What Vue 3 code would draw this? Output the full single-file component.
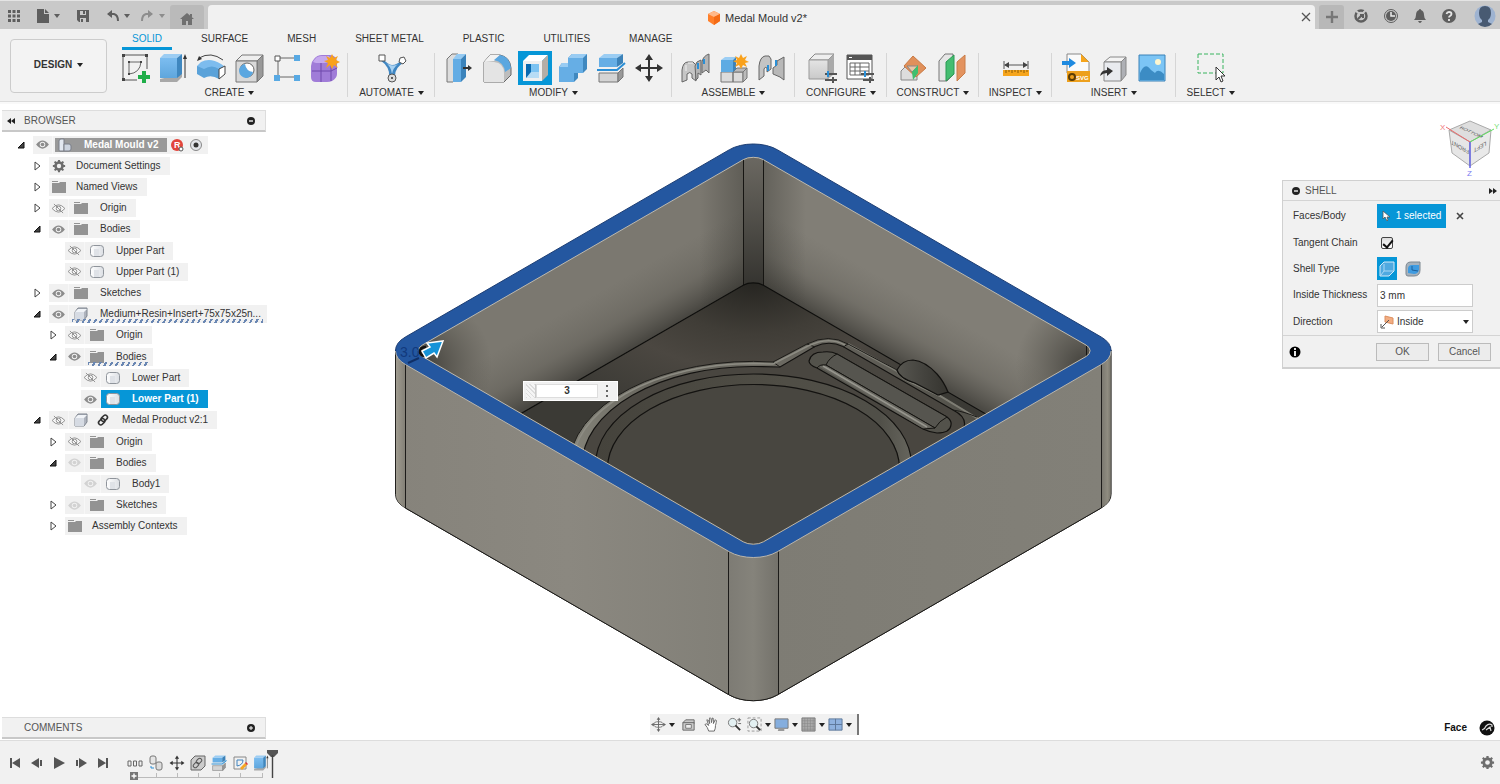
<script setup>
import { ref } from 'vue'

const tabs = ['SOLID', 'SURFACE', 'MESH', 'SHEET METAL', 'PLASTIC', 'UTILITIES', 'MANAGE']
const activeTab = ref('SOLID')

const groups = [
  { label: 'CREATE', icons: ['sketch', 'extrude', 'revolve', 'hole', 'pattern', 'form'] },
  { label: 'AUTOMATE', icons: ['automate'] },
  { label: 'MODIFY', icons: ['presspull', 'fillet', 'shell', 'combine', 'split', 'move'] },
  { label: 'ASSEMBLE', icons: ['joint', 'component', 'asbuilt'] },
  { label: 'CONFIGURE', icons: ['config', 'table'] },
  { label: 'CONSTRUCT', icons: ['plane', 'midplane'] },
  { label: 'INSPECT', icons: ['measure'] },
  { label: 'INSERT', icons: ['svgfile', 'derive', 'canvas'] },
  { label: 'SELECT', icons: ['select'] },
]

const rows = [
  { level: 0, open: true, eye: 'on', icon: 'assembly', name: 'Medal Mould v2', root: true },
  { level: 1, open: false, icon: 'gear', name: 'Document Settings' },
  { level: 1, open: false, icon: 'folder', name: 'Named Views' },
  { level: 1, open: false, eye: 'off', icon: 'folder', name: 'Origin' },
  { level: 1, open: true, eye: 'on', icon: 'folder', name: 'Bodies' },
  { level: 2, eye: 'off', icon: 'body', name: 'Upper Part' },
  { level: 2, eye: 'off', icon: 'body', name: 'Upper Part (1)' },
  { level: 1, open: false, eye: 'on', icon: 'folder', name: 'Sketches' },
  { level: 1, open: true, eye: 'on', icon: 'comp', name: 'Medium+Resin+Insert+75x75x25n...', hatch: true },
  { level: 2, open: false, eye: 'off', icon: 'folder', name: 'Origin' },
  { level: 2, open: true, eye: 'on', icon: 'folder', name: 'Bodies', hatch: true },
  { level: 3, eye: 'off', icon: 'body', name: 'Lower Part' },
  { level: 3, eye: 'on', icon: 'body', name: 'Lower Part (1)', selected: true },
  { level: 1, open: true, eye: 'off', icon: 'comp', link: true, name: 'Medal Product v2:1' },
  { level: 2, open: false, eye: 'off', icon: 'folder', name: 'Origin' },
  { level: 2, open: true, eye: 'pale', icon: 'folder', name: 'Bodies' },
  { level: 3, eye: 'pale', icon: 'body', name: 'Body1' },
  { level: 2, open: false, eye: 'pale', icon: 'folder', name: 'Sketches' },
  { level: 2, open: false, icon: 'folder', name: 'Assembly Contexts' },
]

const navTools = [
  { id: 'orbit', caret: true },
  { id: 'lookat' },
  { id: 'pan' },
  { id: 'zoom' },
  { id: 'fit', caret: true },
  { id: 'display', caret: true },
  { id: 'grid', caret: true },
  { id: 'views', caret: true },
]

const playback = ['first', 'prev', 'play', 'next', 'last']
const features = ['dots', 'copy', 'move', 'rigid', 'split', 'sketchedit', 'extrude']

const tangent = ref(true)
const thickness = ref('3 mm')
const distance = ref('3')
const direction = ref('Inside')
</script>

<template>
  <div class="app">
    <svg class="sprite" aria-hidden="true">
      <defs>
        <linearGradient id="gBlue" x1="0" y1="0" x2="0" y2="1"><stop offset="0" stop-color="#7cbdf0" /><stop offset="1" stop-color="#5ea6dd" /></linearGradient>
        <linearGradient id="gGrey" x1="0" y1="0" x2="0" y2="1"><stop offset="0" stop-color="#e4e4e4" /><stop offset="1" stop-color="#c9c9c9" /></linearGradient>
        <linearGradient id="gBody" x1="0" y1="0" x2="1" y2="0"><stop offset="0" stop-color="#fff" /><stop offset="1" stop-color="#dcdfe4" /></linearGradient>
      </defs>

      <symbol id="sketch" viewBox="0 0 30 30">
        <path d="M3 2H27V16M3 2V27H17" fill="none" stroke="#555" />
        <path d="M9 9H21M9 9V21M21 9Q20 20 9 21" fill="none" stroke="#666" />
        <path d="M2 1h3v3h-3zM25 1h3v3h-3zM2 25h3v3h-3zM8 8h2v2h-2zM20 8h2v2h-2zM8 20h2v2h-2z" fill="#444" />
        <path d="M22 18h4v4h4v4h-4v4h-4v-4h-4v-4h4z" fill="#1fae49" />
      </symbol>
      <symbol id="extrude" viewBox="0 0 30 30">
        <path d="M2 26V29H19L24 24V21z" fill="#a8a8a8" />
        <path d="M2 5H19V25H2z" fill="url(#gBlue)" />
        <path d="M2 5L6 1H24L19 5z" fill="#9ccdf3" />
        <path d="M19 5L24 1V21L19 25z" fill="#3f87bf" />
        <path d="M27 25V4" stroke="#333" /><path d="M25 6L27 1L29 6z" fill="#333" />
      </symbol>
      <symbol id="revolve" viewBox="0 0 30 30">
        <path d="M3 5Q15 -2 27 7" fill="none" stroke="#444" /><path d="M1 8L3 3L6 6z" fill="#333" />
        <path d="M1 13L5 9Q14 4 25 11L28 13L23 19Q15 15 8 23L1 20z" fill="#7dbcee" />
        <path d="M1 13L8 16V25L1 21zM8 16Q16 11 23 16V26Q15 21 8 25z" fill="#5aa2d9" />
        <path d="M23 16L29 13V21L23 26z" fill="#fff" stroke="#444" />
      </symbol>
      <symbol id="hole" viewBox="0 0 30 30">
        <path d="M2 8L8 2H29L23 8z" fill="#eee" stroke="#777" /><path d="M23 8L29 2V23L23 29z" fill="#999" stroke="#777" />
        <path d="M2 8H23V29H2z" fill="#d9d9d9" stroke="#777" />
        <circle cx="13" cy="17" r="7" fill="#fff" stroke="#666" /><path d="M11 11Q12 18 19 19A7 7 0 1 1 11 11z" fill="#5ba7e0" />
      </symbol>
      <symbol id="pattern" viewBox="0 0 30 30">
        <path d="M6 5H24M6 5V24H24" fill="none" stroke="#666" />
        <path d="M3 3h5v5h-5z" fill="#fff" stroke="#555" /><path d="M22 2h6v6h-6zM22 22h6v6h-6zM2 22h6v6h-6z" fill="#58a9e3" />
      </symbol>
      <symbol id="form" viewBox="0 0 30 30">
        <path d="M1 13Q1 9 4 6Q7 2 12 2H20Q27 3 27 9V21Q27 25 22 28Q20 29 17 29H6Q1 29 1 24z" fill="#a07cd8" />
        <path d="M3 9Q6 3 11 3H19L22 8Q18 10 14 10H6z" fill="#c5a9ee" />
        <path d="M2 18H21M11 10V29M21 10V28M21 18L27 15" fill="none" stroke="#6e49ab" />
        <path d="M22 1L24 5L28 3L26 7L30 9L26 11L28 15L24 12L22 16L20 12L16 15L18 10L14 8L18 7L16 3L20 5z" fill="#f9a11b" />
      </symbol>
      <symbol id="automate" viewBox="0 0 30 30">
        <path d="M3 3Q11 12 15 12Q20 12 26 6L28 9Q18 14 18 23H12Q13 14 3 7z" fill="#3f86c2" />
        <path d="M8 9Q15 15 21 11Q16 15 15 21Q14 13 8 9z" fill="#a9d2f2" />
        <path d="M2 2h6v6h-6z" fill="#fff" stroke="#555" /><path d="M23 5l4-1l2 4l-3 3l-4-2z" fill="#fff" stroke="#555" />
        <circle cx="15" cy="25" r="4" fill="#ddd" stroke="#555" /><circle cx="15" cy="25" r="1" fill="#333" />
      </symbol>
      <symbol id="presspull" viewBox="0 0 30 30">
        <path d="M3 6L8 1H14V24L9 29H3z" fill="#ddd" stroke="#777" /><path d="M9 6H17V29H9z" fill="#63ace4" />
        <path d="M9 6L13 1H22L17 6z" fill="#95caf2" /><path d="M17 6L22 1V24L17 29z" fill="#3b83bb" />
        <path d="M19 15H25" stroke="#333" stroke-width="2" /><path d="M24 12L28 15L24 18z" fill="#333" />
      </symbol>
      <symbol id="fillet" viewBox="0 0 30 30">
        <path d="M2 9L8 2H18Q28 4 29 15V22L22 29H2z" fill="#bdbdbd" stroke="#666" />
        <path d="M2 9H12Q22 10 22 20V29H2z" fill="#e4e4e4" /><path d="M2 9L8 2H18L12 8z" fill="#f2f2f2" />
        <path d="M12 7L18 2Q28 4 29 15L23 19Q22 9 12 7z" fill="#5ba7e0" />
      </symbol>
      <symbol id="shell" viewBox="0 0 30 30">
        <path d="M3 8L9 2H28L22 8z" fill="#fff" /><path d="M22 8L28 2V22L22 28z" fill="#b5aea6" />
        <path d="M3 8H22V28H3z" fill="#f0f0f0" /><path d="M6 11H19V25H6z" fill="#0a6ab0" />
        <path d="M11 11H19V19L11 19z" fill="#7cc3f2" /><path d="M6 25L11 19H19V25z" fill="#b7dcf5" />
      </symbol>
      <symbol id="combine" viewBox="0 0 30 30">
        <path d="M1 14L4 10H10V5L14 1H29V16L25 20H20V25L16 29H1z" fill="#3f88bf" />
        <path d="M10 5H25V20H16V29H1V14H10z" fill="#66aee5" /><path d="M10 5L14 1H29L25 5zM1 14L4 10H10V14z" fill="#99ccf3" />
      </symbol>
      <symbol id="split" viewBox="0 0 30 30">
        <path d="M3 5H21V14H3z" fill="#66aee5" /><path d="M3 5L8 1H27L21 5z" fill="#9bcdf3" /><path d="M21 5L27 1V10L21 14z" fill="#3c82b8" />
        <path d="M1 17H21L29 10" fill="none" stroke="#2a8fd6" stroke-width="2" />
        <path d="M3 20H22V29H3z" fill="#d4d4d4" stroke="#777" /><path d="M22 20L27 15V24L22 29z" fill="#999" stroke="#777" />
      </symbol>
      <symbol id="move" viewBox="0 0 30 30">
        <path d="M15 4V26M4 15H26" stroke="#333" stroke-width="2" />
        <path d="M15 1L19 7H11zM15 29L19 23H11zM1 15L7 11V19zM29 15L23 11V19z" fill="#333" />
      </symbol>
      <symbol id="joint" viewBox="0 0 30 30">
        <path d="M1 17Q2 9 7 9H12L15 12V28L11 25V21Q9 18 6 21V27L1 29z" fill="#c6c6c6" stroke="#666" />
        <path d="M14 13Q15 8 20 7V22L17 20V25L15 27z" fill="#b4b4b4" stroke="#666" /><path d="M21 9Q22 3 28 1V20L25 17L21 20z" fill="#b4b4b4" stroke="#666" />
        <path d="M5 12V18M7 10H12" fill="none" stroke="#f2f2f2" />
        <path d="M17 16V10M23 11V6" stroke="#2a8fd6" stroke-width="2" />
      </symbol>
      <symbol id="component" viewBox="0 0 30 30">
        <path d="M2 19H14V29H2zM14 19H24V29H14z" fill="#dcdcdc" stroke="#777" /><path d="M24 19L28 15V25L24 29zM14 19L18 15H28L24 19z" fill="#bbb" stroke="#777" />
        <path d="M2 7H14V19H2z" fill="#5eabe3" /><path d="M2 7L6 4H17L14 7z" fill="#9ccef4" /><path d="M14 7L17 4V16L14 19z" fill="#3b83bb" />
        <path d="M22 1L24 5L28 3L26 7L30 9L26 10L28 14L24 12L22 16L20 12L16 14L18 10L14 8L18 7L16 3L20 5z" fill="#f9a11b" />
      </symbol>
      <symbol id="asbuilt" viewBox="0 0 30 30">
        <path d="M2 13Q3 4 8 3H12L14 6V16L10 19V15Q8 13 7 16V23L2 27z" fill="#c4c4c4" stroke="#666" />
        <path d="M16 15L20 12V8L27 4V27L23 24L16 21z" fill="#b8b8b8" stroke="#666" /><path d="M11 12V18M19 7V13" stroke="#2a8fd6" stroke-width="2" />
      </symbol>
      <symbol id="config" viewBox="0 0 30 30">
        <path d="M2 7L8 1H27L21 7z" fill="#eee" stroke="#888" /><path d="M21 7L27 1V21L21 26z" fill="#aaa" /><path d="M2 7H21V26H2z" fill="url(#gGrey)" stroke="#999" />
        <path d="M18 21H30M18 27H30" stroke="#555" stroke-width="2" /><path d="M21 18V24" stroke="#2a8fd6" stroke-width="2" /><path d="M26 24V30" stroke="#555" stroke-width="2" />
      </symbol>
      <symbol id="table" viewBox="0 0 30 30">
        <path d="M2 2H27V26H2z" fill="#fff" stroke="#555" /><path d="M2 2H27V7H2z" fill="#555" /><path d="M4 4h3v1h-3z" fill="#fff" />
        <path d="M5 10H24V22H5zM5 14H24M5 18H24M10 10V22M15 10V22" fill="none" stroke="#666" />
        <path d="M16 21H29M18 27H29" stroke="#555" stroke-width="2" /><path d="M20 18V24" stroke="#2a8fd6" stroke-width="2" /><path d="M25 24V30" stroke="#555" stroke-width="2" />
      </symbol>
      <symbol id="plane" viewBox="0 0 30 30">
        <path d="M2 18L7 13H18V27H2z" fill="#ddd" stroke="#888" /><path d="M14 3L27 15L17 24L5 13z" fill="#e0905a" stroke="#c87a45" />
        <path d="M8 13H19L13 19z" fill="#e9c4a6" stroke="#888" /><path d="M13 19L19 12V20L14 27z" fill="#3fbf6f" />
      </symbol>
      <symbol id="midplane" viewBox="0 0 30 30">
        <path d="M2 8L8 1H16V22L10 28H2z" fill="#e6e6e6" stroke="#777" /><path d="M9 9L17 2V21L9 28z" fill="#45bd70" stroke="#2b9a54" /><path d="M20 9L28 2V20L20 28z" fill="#e3935f" stroke="#c97c48" />
      </symbol>
      <symbol id="measure" viewBox="0 0 30 30">
        <path d="M3 8V16M27 8V16M4 12H26" stroke="#555" /><path d="M3 12l5-3v6zM27 12l-5-3v6z" fill="#444" />
        <path d="M2 17H28V23H2z" fill="#f6a51c" /><path d="M5 17v3M8 17v2M11 17v3M14 17v2M17 17v3M20 17v2M23 17v3M26 17v2" stroke="#8a5a05" />
      </symbol>
      <symbol id="svgfile" viewBox="0 0 30 30">
        <path d="M6 1H20L28 9V20H6z" fill="#fafafa" stroke="#888" /><path d="M20 1L28 9H20z" fill="#f6a51c" /><path d="M6 18H29V29H6z" fill="#eda01d" />
        <circle cx="11" cy="24" r="3" fill="none" stroke="#5b3d05" stroke-width="2" />
        <path d="M1 8H8V5L15 10L8 15V12H1z" fill="#1f8ae0" />
      </symbol>
      <symbol id="derive" viewBox="0 0 30 30">
        <path d="M5 9L11 4H27L22 9z" fill="#f4f4f4" stroke="#888" /><path d="M22 9L27 4V22L22 28z" fill="#aeb0b5" stroke="#888" /><path d="M5 9H22V28H5z" fill="#e9ebef" stroke="#888" />
        <path d="M1 23Q2 17 8 17V14L14 18L8 23V20Q4 20 1 23z" fill="#333" />
      </symbol>
      <symbol id="canvas" viewBox="0 0 30 30">
        <path d="M2 2H28V28H2z" fill="#7cc5f5" stroke="#3b82b8" /><path d="M3 20Q8 8 14 17L18 20Q21 15 27 21V27H3z" fill="#3c8cc4" /><circle cx="21" cy="9" r="3" fill="#fdf6cf" />
      </symbol>
      <symbol id="select" viewBox="0 0 30 30">
        <path d="M2 1H27V20H2z" fill="none" stroke="#38b45e" stroke-dasharray="4 2" />
        <path d="M20 14V27L23 24L25 29L27 28L25 23H29z" fill="#fff" stroke="#333" />
      </symbol>

      <symbol id="eye-on" viewBox="0 0 16 12"><path d="M1 6Q8 -3 15 6Q8 15 1 6z" fill="#8c8c8c" /><circle cx="8" cy="6" r="3" fill="#f1f1f1" /><circle cx="8" cy="6" r="2" fill="#8c8c8c" /></symbol>
      <symbol id="eye-pale" viewBox="0 0 16 12"><path d="M1 6Q8 -3 15 6Q8 15 1 6z" fill="#d2d2d2" /><circle cx="8" cy="6" r="3" fill="#f1f1f1" /><circle cx="8" cy="6" r="2" fill="#d2d2d2" /></symbol>
      <symbol id="eye-off" viewBox="0 0 16 12"><path d="M1 6Q8 -2 15 6Q8 14 1 6z" fill="#f6f6f6" stroke="#8c8c8c" /><circle cx="8" cy="6" r="2.5" fill="none" stroke="#8c8c8c" /><path d="M3 1L13 11" stroke="#8c8c8c" /></symbol>
      <symbol id="folder" viewBox="0 0 16 14"><path d="M1 1H7V2H1zM1 3H8L9 2H15V13H1z" fill="#939393" /></symbol>
      <symbol id="gear" viewBox="0 0 16 16">
        <circle cx="8" cy="8" r="4" fill="none" stroke="#6d6d6d" stroke-width="3" /><path d="M8 1V4M8 12V15M1 8H4M12 8H15M3 3L5 5M11 11L13 13M3 13L5 11M11 5L13 3" stroke="#6d6d6d" stroke-width="2.4" />
      </symbol>
      <symbol id="body" viewBox="0 0 16 14"><rect x="1.500" y="1.500" width="13" height="11" rx="3" fill="url(#gBody)" stroke="#8f949b" /><path d="M5 5H10V12H5z" fill="#dfe2e7" /></symbol>
      <symbol id="comp" viewBox="0 0 16 14"><path d="M2 5L5 1H14V9L11 13H2z" fill="#aeb3bd" stroke="#7f858f" /><path d="M2 5H11V13H2z" fill="#d6dbe3" /><path d="M2 5L5 2H14L11 5z" fill="#f0f3f7" /></symbol>
      <symbol id="assembly" viewBox="0 0 16 14"><path d="M2 3Q2 1 4 1H7V13H3Q2 13 2 12z" fill="#e3e8f0" stroke="#7a7f88" /><path d="M7 6H12Q14 6 14 8V11Q14 13 12 13H7z" fill="#cdd4df" stroke="#7a7f88" /></symbol>
      <symbol id="chain" viewBox="0 0 16 16"><g fill="none" stroke="#333" stroke-width="1.800"><rect x="7" y="2" width="5" height="8" rx="2.500" transform="rotate(45 9.500 6)" /><rect x="4" y="6" width="5" height="8" rx="2.500" transform="rotate(45 6.500 10)" /></g></symbol>

      <symbol id="orbit" viewBox="0 0 16 16"><path d="M8 2V14M2 8H14" stroke="#666" /><path d="M8 0L10 3H6zM8 16L10 13H6zM0 8L3 6V10zM16 8L13 6V10z" fill="#666" /><ellipse cx="8" cy="8" rx="5" ry="3" fill="none" stroke="#777" /></symbol>
      <symbol id="lookat" viewBox="0 0 16 16"><path d="M2 6L5 3H14V7M2 6H14V14H2z" fill="#c9c9c9" stroke="#666" /><path d="M5 8H11V12H5z" fill="#eee" stroke="#777" /></symbol>
      <symbol id="pan" viewBox="0 0 16 16"><path d="M5 15Q4 11 1 8Q2 6 5 9L3 3Q5 2 6 7V1Q8 0 8 6L9 1Q11 1 10 7L12 3Q14 3 13 6Q12 9 12 12L11 15z" fill="#fff" stroke="#666" /></symbol>
      <symbol id="zoom" viewBox="0 0 16 16"><circle cx="6" cy="6" r="4.500" fill="#e3f0f2" stroke="#777" /><path d="M9 9L14 14" stroke="#333" stroke-width="2" /><path d="M11 3H15M13 1V5M12 7H15" stroke="#666" /></symbol>
      <symbol id="fit" viewBox="0 0 16 16"><path d="M1 1H15V15H1z" fill="none" stroke="#999" stroke-dasharray="3 2" /><circle cx="7" cy="7" r="4.500" fill="#e3f0f2" stroke="#777" /><path d="M10 10L14 14" stroke="#333" stroke-width="2" /></symbol>
      <symbol id="display" viewBox="0 0 16 16"><path d="M1 2H15V12H1z" fill="#85aede" stroke="#777" /><path d="M5 12H11V15H4z" fill="#999" /></symbol>
      <symbol id="grid" viewBox="0 0 16 16"><path d="M1 1H15V15H1z" fill="#aaa" stroke="#777" /><path d="M4 1V15M7 1V15M10 1V15M13 1V15M1 4H15M1 7H15M1 10H15M1 13H15" stroke="#888" stroke-width=".6" /></symbol>
      <symbol id="views" viewBox="0 0 16 16"><path d="M1 2H15V14H1zM8 2V14M1 8H15" fill="#8fb2df" stroke="#5c7699" /></symbol>

      <symbol id="first" viewBox="0 0 16 16"><path d="M3 3H5V13H3zM13 3V13L5 8z" fill="#555" /></symbol>
      <symbol id="prev" viewBox="0 0 16 16"><path d="M10 3V13L2 8zM11 5H13V11H11z" fill="#555" /></symbol>
      <symbol id="play" viewBox="0 0 16 16"><path d="M3 2L14 8L3 14z" fill="#555" /></symbol>
      <symbol id="next" viewBox="0 0 16 16"><path d="M6 3V13L14 8zM3 5H5V11H3z" fill="#555" /></symbol>
      <symbol id="last" viewBox="0 0 16 16"><path d="M11 3H13V13H11zM3 3V13L11 8z" fill="#555" /></symbol>
      <symbol id="dots" viewBox="0 0 16 16"><path d="M1 6h3v5h-3zM6.500 6h3v5h-3zM12 6h3v5h-3z" fill="none" stroke="#666" /></symbol>
      <symbol id="copy" viewBox="0 0 16 16"><rect x="2" y="1" width="6" height="8" rx="2" fill="#e5e5e5" stroke="#777" /><rect x="8" y="7" width="6" height="8" rx="2" fill="#ddd" stroke="#777" /><path d="M3 11V13H6" fill="none" stroke="#2a8fd6" /></symbol>
      <symbol id="rigid" viewBox="0 0 16 16"><path d="M1 5L5 1H15V11L11 15H1z" fill="#ccc" stroke="#666" /><g fill="none" stroke="#555"><rect x="7" y="3" width="4" height="6" rx="2" transform="rotate(45 9 6)" /><rect x="4" y="7" width="4" height="6" rx="2" transform="rotate(45 6 10)" /></g></symbol>
      <symbol id="sketchedit" viewBox="0 0 16 16"><path d="M2 2H14V14H2z" fill="none" stroke="#888" /><path d="M5 5H11Q11 10 5 11z" fill="none" stroke="#3e82bd" /><path d="M8 13L13 8L15 10L10 15z" fill="#f5a623" /><path d="M13 8L14 7L16 9L15 10z" fill="#d33" /></symbol>
    </svg>

    <header class="titlebar">
      <div class="quick">
        <button class="qbtn" aria-label="Show data panel"><svg width="14" height="14" viewBox="0 0 14 14"><path d="M1 1h3v3h-3zM5.500 1h3v3h-3zM10 1h3v3h-3zM1 5.500h3v3h-3zM5.500 5.500h3v3h-3zM10 5.500h3v3h-3zM1 10h3v3h-3zM5.500 10h3v3h-3zM10 10h3v3h-3z" fill="#5e5e5e" /></svg></button>
        <button class="qbtn file" aria-label="File"><svg width="14" height="16" viewBox="0 0 14 16"><path d="M1 1H8V6H13V15H1zM9 1L13 5H9z" fill="#5e5e5e" /></svg><i class="caret"></i></button>
        <button class="qbtn save" aria-label="Save"><svg width="14" height="14" viewBox="0 0 14 14"><path d="M1 1H13V13H3L1 11z" fill="#5e5e5e" /><path d="M4 2H10V6H4zM4 9H10V13H4z" fill="#cbcbcb" /><path d="M7 2H9V5H7zM5 10H7V13H5z" fill="#5e5e5e" /></svg></button>
        <button class="qbtn undo" aria-label="Undo"><svg width="14" height="14" viewBox="0 0 14 14"><path d="M2 5H8Q12 6 12 12" fill="none" stroke="#5e5e5e" stroke-width="2" /><path d="M6 1V9L1 5z" fill="#5e5e5e" /></svg><i class="caret"></i></button>
        <button class="qbtn redo" aria-label="Redo"><svg width="14" height="14" viewBox="0 0 14 14"><path d="M12 5H6Q2 6 2 12" fill="none" stroke="#8d8d8d" stroke-width="2" /><path d="M8 1V9L13 5z" fill="#8d8d8d" /></svg><i class="caret dim"></i></button>
      </div>
      <button class="home" aria-label="Home"><svg width="14" height="14" viewBox="0 0 14 14"><path d="M7 1L14 7H12V13H8V9H6V13H2V7H0zM10 2H12V5L10 4z" fill="#707070" /></svg></button>
      <div class="doc-tab">
        <div class="doc-name">
          <svg width="14" height="16" viewBox="0 0 14 16"><path d="M7 1L13 4V11L7 15L1 11V4z" fill="#ff7f2a" /><path d="M7 1L13 4L7 7L1 4z" fill="#ffb98a" /><path d="M7 7L13 4V11L7 15z" fill="#f46b16" /></svg>
          <span>Medal Mould v2*</span>
        </div>
        <button class="close" aria-label="Close tab"><svg width="10" height="10" viewBox="0 0 10 10"><path d="M1 1L9 9M9 1L1 9" stroke="#555" stroke-width="1.300" /></svg></button>
      </div>
      <button class="new-tab" aria-label="New tab"><svg width="12" height="12" viewBox="0 0 12 12"><path d="M6 0V12M0 6H12" stroke="#777" stroke-width="2.400" /></svg></button>
      <div class="status">
        <button aria-label="Extensions"><svg width="16" height="16" viewBox="0 0 16 16"><circle cx="8" cy="8" r="5.500" fill="none" stroke="#5e5e5e" stroke-width="2.500" /><path d="M3 3L8 7L13 2" fill="none" stroke="#c9c9c9" stroke-width="2" /><path d="M5 11L9 7M7 7H10V10" fill="none" stroke="#5e5e5e" stroke-width="2" /></svg></button>
        <button aria-label="Job status"><svg width="16" height="16" viewBox="0 0 16 16"><circle cx="8" cy="8" r="6.500" fill="none" stroke="#5e5e5e" /><circle cx="8" cy="8" r="5" fill="#5e5e5e" /><path d="M8 4V8H12" fill="none" stroke="#eee" stroke-width="1.500" /></svg></button>
        <button aria-label="Notifications"><svg width="16" height="16" viewBox="0 0 16 16"><path d="M8 1Q9 1 9 2Q12 3 12 7Q12 10 14 12H2Q4 10 4 7Q4 3 7 2Q7 1 8 1zM6 13H10Q9 15 8 15Q7 15 6 13z" fill="#5e5e5e" /></svg></button>
        <button aria-label="Help"><svg width="16" height="16" viewBox="0 0 16 16"><circle cx="8" cy="8" r="7" fill="#5e5e5e" /><path d="M5.500 6Q6 4 8 4Q10.500 4 10.500 6Q10.500 7 9 8Q8 8.500 8 9.500M8 11V13" fill="none" stroke="#e6e6e6" stroke-width="1.800" /></svg></button>
        <button class="avatar" aria-label="Account"><svg width="22" height="22" viewBox="0 0 22 22"><circle cx="11" cy="11" r="10.500" fill="#9eb3d1" /><path d="M5 8Q5 1 11 1Q17 1 17 8Q17 13 14 15V17L18 19Q15 22 11 22Q7 22 4 19L8 17V15Q5 13 5 8z" fill="#485a72" /></svg></button>
      </div>
    </header>

    <section class="ribbon">
      <button class="workspace">DESIGN<i class="caret dark"></i></button>
      <div class="tools">
        <nav class="tabs">
          <button v-for="t in tabs" :key="t" :class="{ active: t === activeTab }" @click="activeTab = t">{{ t }}</button>
        </nav>
        <div class="groups">
          <div v-for="g in groups" :key="g.label" class="group">
            <div class="icons">
              <button v-for="i in g.icons" :key="i" class="tool" :class="{ on: i === 'shell' }" :aria-label="i">
                <svg width="30" height="30" viewBox="0 0 30 30"><use :href="'#' + i" /><text v-if="i === 'svgfile'" class="tag" x="15" y="27">SVG</text></svg>
              </button>
            </div>
            <button class="menu">{{ g.label }}<i class="caret dark"></i></button>
          </div>
        </div>
      </div>
    </section>

    <main class="stage">
      <svg class="scene" viewBox="0 104 1500 636" preserveAspectRatio="xMidYMid meet" role="img" aria-label="Mould body">
        <defs>
          <clipPath id="cavity"><path d="M743.200 159.700A14.300 8.200 0 0 1 763.400 159.700L1086 345A14.300 8.200 0 0 1 1086 356.500L763.400 541.800A14.300 8.200 0 0 1 743.200 541.800L422.400 356.500A14.300 8.200 0 0 1 422.400 345z" /></clipPath>
          <linearGradient id="faceL" x1="396" y1="0" x2="740" y2="0" gradientUnits="userSpaceOnUse"><stop offset="0" stop-color="#86837b" /><stop offset=".5" stop-color="#8b8880" /><stop offset="1" stop-color="#817f77" /></linearGradient>
          <linearGradient id="faceR" x1="770" y1="0" x2="1101" y2="0" gradientUnits="userSpaceOnUse"><stop offset="0" stop-color="#7e7c74" /><stop offset="1" stop-color="#828078" /></linearGradient>
          <linearGradient id="edgeF" x1="728" y1="0" x2="778" y2="0" gradientUnits="userSpaceOnUse"><stop offset="0" stop-color="#7d7b74" /><stop offset=".5" stop-color="#85837b" /><stop offset="1" stop-color="#74726b" /></linearGradient>
          <linearGradient id="edgeL" x1="395" y1="0" x2="406" y2="0" gradientUnits="userSpaceOnUse"><stop offset="0" stop-color="#a39f93" /><stop offset="1" stop-color="#807d74" /></linearGradient>
          <linearGradient id="edgeR" x1="1101" y1="0" x2="1112" y2="0" gradientUnits="userSpaceOnUse"><stop offset="0" stop-color="#77756d" /><stop offset=".6" stop-color="#8f8c80" /><stop offset="1" stop-color="#6f6d64" /></linearGradient>
          <linearGradient id="wallShade" x1="0" y1="0" x2="0" y2="1"><stop offset="0" stop-color="#6e6b64" /><stop offset="1" stop-color="#33322e" /></linearGradient>
          <linearGradient id="shadeL" x1="632" y1="347" x2="600" y2="291" gradientUnits="userSpaceOnUse"><stop offset="0" stop-color="#2b2a26" stop-opacity=".62" /><stop offset=".45" stop-color="#45433d" stop-opacity=".25" /><stop offset="1" stop-color="#55534c" stop-opacity="0" /></linearGradient>
          <linearGradient id="shadeR" x1="874" y1="347" x2="906" y2="291" gradientUnits="userSpaceOnUse"><stop offset="0" stop-color="#2b2a26" stop-opacity=".62" /><stop offset=".45" stop-color="#45433d" stop-opacity=".25" /><stop offset="1" stop-color="#55534c" stop-opacity="0" /></linearGradient>
          <linearGradient id="nearL" x1="700" y1="0" x2="743" y2="0" gradientUnits="userSpaceOnUse"><stop offset="0" stop-color="#3a3934" stop-opacity="0" /><stop offset="1" stop-color="#3a3934" stop-opacity=".42" /></linearGradient>
          <linearGradient id="nearR" x1="806" y1="0" x2="763" y2="0" gradientUnits="userSpaceOnUse"><stop offset="0" stop-color="#3a3934" stop-opacity="0" /><stop offset="1" stop-color="#3a3934" stop-opacity=".42" /></linearGradient>
          <radialGradient id="cornerL" cx="422" cy="366" r="70" gradientUnits="userSpaceOnUse"><stop offset="0" stop-color="#302f2b" stop-opacity=".8" /><stop offset="1" stop-color="#4a4841" stop-opacity="0" /></radialGradient>
          <radialGradient id="cornerR" cx="1086" cy="366" r="70" gradientUnits="userSpaceOnUse"><stop offset="0" stop-color="#302f2b" stop-opacity=".8" /><stop offset="1" stop-color="#4a4841" stop-opacity="0" /></radialGradient>
          <radialGradient id="floor" cx="753" cy="282" r="250" gradientTransform="translate(0 119) scale(1 .58)" gradientUnits="userSpaceOnUse"><stop offset="0" stop-color="#262521" /><stop offset=".35" stop-color="#403d37" /><stop offset=".6" stop-color="#4b4741" /><stop offset="1" stop-color="#3b3a35" /></radialGradient>
          <linearGradient id="ridge" x1="570" y1="0" x2="985" y2="0" gradientUnits="userSpaceOnUse"><stop offset="0" stop-color="#85847a" /><stop offset=".2" stop-color="#66645c" /><stop offset=".5" stop-color="#6c6a62" /><stop offset=".7" stop-color="#605e57" /><stop offset="1" stop-color="#504f48" /></linearGradient>
          <linearGradient id="ring" x1="596" y1="0" x2="911" y2="0" gradientUnits="userSpaceOnUse"><stop offset="0" stop-color="#45433c" /><stop offset=".6" stop-color="#504e46" /><stop offset=".9" stop-color="#504f48" /><stop offset="1" stop-color="#66655d" /></linearGradient>
          <linearGradient id="bump" x1="897" y1="0" x2="948" y2="0" gradientUnits="userSpaceOnUse"><stop offset="0" stop-color="#575650" /><stop offset=".5" stop-color="#45443f" /><stop offset="1" stop-color="#35342f" /></linearGradient>
        </defs>

        <path d="M395.500 350V494.300A33.800 19.500 0 0 0 405.400 508L729.400 695A33.800 19.500 0 0 0 777.200 695L1101.200 508A33.800 19.500 0 0 0 1111.100 494.300V350z" fill="#828078" stroke="#22211e" />
        <path d="M405.400 360V508L729.400 695V545z" fill="url(#faceL)" />
        <path d="M777.200 545V695L1101.200 508V360z" fill="url(#faceR)" />
        <path d="M729 545V695A33.800 19.500 0 0 0 778 695V545z" fill="url(#edgeF)" />
        <path d="M396 352V494.300A33.800 19.500 0 0 0 405.400 508V360z" fill="url(#edgeL)" />
        <path d="M1101.200 360V508A33.800 19.500 0 0 0 1110.600 494.300V352z" fill="url(#edgeR)" />
        <path d="M405.500 362V508M728.500 550V694M778.500 550V694M1101.500 362V508M405.400 508L729.400 695A33.800 19.500 0 0 0 777.200 695L1101.200 508" fill="none" stroke="#1c1b19" />

        <path d="M729.400 149.700A33.800 19.500 0 0 1 777.200 149.700L1101.200 337A33.800 19.500 0 0 1 1101.200 364.500L777.200 551.800A33.800 19.500 0 0 1 729.400 551.800L405.400 364.500A33.800 19.500 0 0 1 405.400 337z" fill="#2457a0" />
        <path d="M395.500 351A33.800 19.500 0 0 0 405.400 364.500L729.400 551.800A33.800 19.500 0 0 0 777.200 551.800L1101.200 364.500A33.800 19.500 0 0 0 1111.100 351" fill="none" stroke="#b9b5ac" />
        <path d="M395.500 351A33.800 19.500 0 0 1 405.400 337L729.400 149.700A33.800 19.500 0 0 1 777.200 149.700L1101.200 337A33.800 19.500 0 0 1 1111.100 351" fill="none" stroke="#1c3d73" />

        <g clip-path="url(#cavity)">
          <path d="M410 150H753V560H410z" fill="#7b7870" />
          <path d="M753 150H1100V560H753z" fill="#817e76" />
          <path d="M743 130V285L410 477V322z" fill="url(#shadeL)" />
          <path d="M763 130V285L1100 480V325z" fill="url(#shadeR)" />
          <path d="M690 150H743V320H690z" fill="url(#nearL)" />
          <path d="M763 150H816V320H763z" fill="url(#nearR)" />
          <path d="M410 290H500V440H410z" fill="url(#cornerL)" />
          <path d="M1010 290H1100V440H1010z" fill="url(#cornerR)" />
          <path d="M743.500 150H763.500V290H743.500z" fill="url(#wallShade)" />
          <path d="M743.500 150V285.500M763.500 150V285.500M1086.500 340V360" stroke="#161512" />
          <path d="M743.200 285.300A14.300 8.200 0 0 1 763.400 285.300L1100 480V560H410V477.500z" fill="url(#floor)" stroke="#0e0e0c" stroke-width="1.200" />

          <path d="M569 468A184 106 0 0 1 773 362L807 344Q829 333 848 344L897 370Q900 378 915 383L940 395L985 422L960 560H569z" fill="url(#ridge)" />
          <path d="M848 344L897 371Q900 378 915 384L940 396L985 423" fill="none" stroke="#7d7c73" stroke-width="2" />
          <path d="M582 465A171 99 0 0 1 753 366.500L780 367L815 346.500Q829 340 843 346.500L953 410Q967 417 964 427V560H582z" fill="#494640" stroke="#131210" stroke-width="1.200" />
          <path d="M569 468A184 106 0 0 1 773 362L780 367M773 362L807 344L815 347M807 344Q829 333 848 344L843 347M848 344L897 370Q900 378 915 383L940 395M953 410Q960 411 966 413L977 417" fill="none" stroke="#1c1b18" />
          <path d="M572 467A181 104 0 0 1 753 363.500L773 364L808 346Q829 336 845 345" fill="none" stroke="#8d8c83" stroke-width="1.600" />
          <ellipse cx="753.500" cy="465" rx="158" ry="91" fill="url(#ring)" stroke="#131210" stroke-width="1.200" />
          <ellipse cx="753.500" cy="468.500" rx="146" ry="84" fill="#484640" stroke="#131210" stroke-width="1.200" />

          <path d="M897 370Q902 360 913 360Q925 361 937 374Q944 382 948 392L938 395L915 383Q899 378 897 370z" fill="url(#bump)" stroke="#12110f" stroke-width="1.200" />
          <path d="M809 361Q811 352 823 352Q831 351 837 354L947 417Q952 421 951 425Q950 433 937 433Q929 432 923 429L817 368Q809 365 809 361z" fill="#53524b" stroke="#12110f" stroke-width="1.200" />
          <path d="M837 354Q829 358 826 365L935 428Q939 421 947 417z" fill="#56554f" stroke="#151411" />
          <path d="M818 366L826 365L935 428L924 429z" fill="#66655e" /><path d="M823 366L927 427" stroke="#96958d" stroke-width="1.600" /><path d="M817 368Q820 364 826 365L935 428L923 429" fill="none" stroke="#151411" />
        </g>
        <path d="M743.200 159.700A14.300 8.200 0 0 1 763.400 159.700L1086 345A14.300 8.200 0 0 1 1086 356.500L763.400 541.800A14.300 8.200 0 0 1 743.200 541.800L422.400 356.500A14.300 8.200 0 0 1 422.400 345z" fill="none" stroke="#bdb9ae" />

        <text x="400" y="357" font-family="Liberation Sans" font-size="14" fill="#123a7d">3.0</text>
        <path d="M408 363L419 358" stroke="#102f66" stroke-width="2" />
        <path d="M426 347Q420 347 420 352Q420 355 424 356" fill="none" stroke="#111" stroke-width="2.500" />
        <path d="M422 351L430 347L427 343L443 341L437 357L434 353L426 358z" fill="#1593d8" stroke="#fff" stroke-width="1.500" />
      </svg>

      <form class="distance" @submit.prevent>
        <i class="grip"></i>
        <input v-model="distance" aria-label="Thickness value">
        <button type="button" aria-label="More"><svg width="4" height="14" viewBox="0 0 4 14"><path d="M1 1h2v2h-2zM1 6h2v2h-2zM1 11h2v2h-2z" fill="#666" /></svg></button>
      </form>

      <aside class="left">
        <section class="browser">
          <header class="bar">
            <svg width="10" height="8" viewBox="0 0 10 8"><path d="M5 1V7L1 4zM9 1V7L5 4z" fill="#222" /></svg>
            <h2>BROWSER</h2>
            <button aria-label="Collapse browser"><svg width="10" height="10" viewBox="0 0 10 10"><circle cx="5" cy="5" r="4" fill="#222" /><path d="M3 5H7" stroke="#fff" stroke-width="1.300" /></svg></button>
          </header>
          <ul class="tree">
            <li v-for="(r, n) in rows" :key="n" :style="{ paddingLeft: 7 + r.level * 16 + 'px' }">
              <span class="twist">
                <svg v-if="r.open === true" width="8" height="8" viewBox="0 0 8 8"><path d="M7 1V7H1z" fill="#444" stroke="#111" /></svg>
                <svg v-else-if="r.open === false" width="9" height="10" viewBox="0 0 9 10"><path d="M2 1L7 5L2 9z" fill="#fff" stroke="#444" /></svg>
              </span>
              <span class="chip" :class="{ root: r.root, picked: r.selected, plain: !r.eye }">
                <button v-if="r.eye" class="eye" aria-label="Toggle visibility"><svg width="15" height="11"><use :href="'#eye-' + r.eye" /></svg></button>
                <span class="entry" :class="{ hatch: r.hatch }">
                  <svg class="kind" width="16" height="14"><use :href="'#' + r.icon" /></svg>
                  <svg v-if="r.link" width="16" height="14"><use href="#chain" /></svg>
                  <span class="label">{{ r.name }}</span>
                </span>
                <template v-if="r.root">
                  <svg class="badge" width="14" height="14" viewBox="0 0 14 14"><circle cx="7" cy="7" r="6" fill="#e2453c" /><text x="4" y="10" font-family="Liberation Sans" font-size="9" font-weight="bold" fill="#fff">R</text><circle cx="11" cy="11" r="2" fill="#fff" stroke="#555" /></svg>
                  <svg width="14" height="14" viewBox="0 0 14 14"><circle cx="7" cy="7" r="5.500" fill="#e3e5ea" stroke="#888" /><circle cx="7" cy="7" r="2.500" fill="#333" /></svg>
                </template>
              </span>
            </li>
          </ul>
        </section>
        <section class="bar comments">
          <h2>COMMENTS</h2>
          <button aria-label="Expand comments"><svg width="10" height="10" viewBox="0 0 10 10"><circle cx="5" cy="5" r="4" fill="#222" /><path d="M3 5H7M5 3V7" stroke="#fff" /></svg></button>
        </section>
      </aside>

      <div class="middle">
        <div class="navbar">
          <button v-for="t in navTools" :key="t.id" :class="{ wide: t.caret }" :aria-label="t.id">
            <svg width="15" height="15"><use :href="'#' + t.id" /></svg><i v-if="t.caret" class="caret dark"></i>
          </button>
        </div>
      </div>

      <aside class="right">
        <svg class="cube" width="64" height="62" viewBox="1436 116 64 62" role="img" aria-label="View cube">
          <path d="M1470 121L1491 130L1470 142L1449 130z" fill="#dedede" stroke="#aaa" />
          <path d="M1449 130L1470 142V166L1452 153z" fill="#e6e6e6" stroke="#aaa" />
          <path d="M1491 130L1470 142V166L1489 153z" fill="#e9e9e9" stroke="#aaa" />
          <g font-family="Liberation Sans" font-size="6" fill="#555" text-anchor="middle">
            <text transform="matrix(.87 .4 -.6 .4 1470 133)">BOTTOM</text>
            <text transform="matrix(-.87 -.5 0 -1 1460 145)">FRONT</text>
            <text transform="matrix(-.87 .5 0 -1 1480 145)">LEFT</text>
          </g>
          <path d="M1446 127L1470 142" stroke="#ec6a6a" /><path d="M1470 142L1494 129" stroke="#5fe05f" /><path d="M1470 142V168" stroke="#6464e6" stroke-width="1.500" />
          <g font-family="Liberation Sans" font-size="8"><text x="1440" y="130" fill="#f08080">X</text><text x="1494" y="129" fill="#77e077">Y</text><text x="1467" y="176" fill="#7b7bf0">Z</text></g>
        </svg>

        <form class="shell" @submit.prevent>
          <header>
            <svg width="10" height="10" viewBox="0 0 10 10"><circle cx="5" cy="5" r="4" fill="#222" /><path d="M3 5H7" stroke="#fff" stroke-width="1.300" /></svg>
            <h2>SHELL</h2>
            <svg class="pin" width="10" height="8" viewBox="0 0 10 8"><path d="M1 1V7L5 4zM5 1V7L9 4z" fill="#222" /></svg>
          </header>
          <div class="fields">
            <div class="field">
              <span>Faces/Body</span>
              <button type="button" class="pick"><svg width="9" height="12" viewBox="0 0 9 12"><path d="M1 1V9L3 7L5 11L6 10L5 7H8z" fill="#fff" stroke="#555" stroke-width=".8" /></svg>1 selected</button>
              <button type="button" class="clear" aria-label="Clear selection"><svg width="8" height="8" viewBox="0 0 8 8"><path d="M1 1L7 7M7 1L1 7" stroke="#444" stroke-width="1.600" /></svg></button>
            </div>
            <div class="field"><label for="tangent">Tangent Chain</label><input id="tangent" v-model="tangent" type="checkbox"></div>
            <div class="field">
              <span>Shell Type</span>
              <button type="button" class="type on" aria-label="Sharp offset"><svg width="16" height="16" viewBox="0 0 16 16"><path d="M1 5L5 1H15V10L10 15H1z" fill="#4fa9e0" stroke="#d5ebf9" /><path d="M5 3V10H14M5 10L2 14" fill="none" stroke="#a9d8f5" /></svg></button>
              <button type="button" class="type" aria-label="Rounded offset"><svg width="16" height="16" viewBox="0 0 16 16"><path d="M1 6Q1 1 6 1H15V9Q15 15 9 15H3Q1 15 1 13z" fill="#a6b2bd" stroke="#7d8790" /><path d="M3 12V8Q3 4 7 4H14V9Q13 13 9 13z" fill="#3f9be0" /><path d="M7 5V9L13 10" fill="none" stroke="#1d609b" /></svg></button>
            </div>
            <div class="field"><label for="thick">Inside Thickness</label><input id="thick" v-model="thickness" class="box"></div>
            <div class="field">
              <label for="dir">Direction</label>
              <span class="drop">
                <svg width="14" height="14" viewBox="0 0 14 14"><path d="M5 1L13 3V9L5 7z" fill="#f2ad82" stroke="#dc8f60" /><path d="M9 5L2 12M1 9V13H5" fill="none" stroke="#555" /></svg>
                <select id="dir" v-model="direction" class="box"><option>Inside</option><option>Outside</option><option>Both</option></select>
                <i class="caret dark"></i>
              </span>
            </div>
          </div>
          <footer>
            <svg width="12" height="12" viewBox="0 0 12 12"><circle cx="6" cy="6" r="5.500" fill="#000" /><path d="M6 2V4M6 5V10" stroke="#fff" stroke-width="1.800" /></svg>
            <button type="submit">OK</button>
            <button type="button">Cancel</button>
          </footer>
        </form>

        <div class="hint">
          <strong>Face</strong>
          <svg width="16" height="16" viewBox="0 0 16 16"><circle cx="8" cy="8" r="7.500" fill="#111" /><path d="M3 10Q6 9 7 6Q10 3 13 5V7M7 10L11 7L12 11" fill="none" stroke="#ddd" stroke-width="1.200" /></svg>
        </div>
      </aside>
    </main>

    <footer class="timeline">
      <div class="playback">
        <button v-for="p in playback" :key="p" :aria-label="p"><svg width="16" height="16"><use :href="'#' + p" /></svg></button>
      </div>
      <div class="track">
        <div class="feats">
          <button v-for="f in features" :key="f" :aria-label="f"><svg width="16" height="16"><use :href="'#' + f" /></svg></button>
        </div>
        <svg class="rail" width="150" height="10" viewBox="0 0 150 10"><path d="M1 1h8v8h-8z" fill="#777" /><path d="M5 2.500V7.500M2.500 5H7.500" stroke="#fff" stroke-width="1.400" /><path d="M9 6.500H134M27.500 2V6M48.500 2V6M69.500 2V6M90.500 2V6M111.500 2V6M133.500 2V6" fill="none" stroke="#bbb" /></svg>
        <svg class="marker" width="12" height="30" viewBox="0 0 12 30"><path d="M0 1H11V4L7 8H4L0 4z" fill="#555" /><path d="M5.500 6V29" stroke="#444" stroke-width="1.400" /></svg>
      </div>
      <button class="prefs" aria-label="Preferences"><svg width="15" height="15"><use href="#gear" /></svg></button>
    </footer>
  </div>
</template>

<style>
html, body { background: #fff; }
</style>

<style scoped>
.app { min-height: 100vh; display: flex; flex-direction: column; background: #fff; color: #333; font: 10px/12px "Liberation Sans", Arial, sans-serif; }
.app * { box-sizing: border-box; }
.sprite { position: absolute; width: 0; height: 0; }
svg { display: block; flex: none; }
button, input, select { font: inherit; color: inherit; margin: 0; padding: 0; border: 0; background: none; }
button { cursor: pointer; display: flex; align-items: center; justify-content: center; }
h2 { margin: 0; font-size: 10px; font-weight: normal; color: #555; }
.caret { width: 0; height: 0; border: 3px solid transparent; border-top: 4px solid #5e5e5e; border-bottom: 0; flex: none; }
.caret.dim { border-top-color: #8d8d8d; }
.caret.dark { border-top-color: #222; }

.titlebar { height: 29px; padding-top: 4px; border-top: 1px solid #e4e4e4; background: #c9c9c9; display: flex; }
.quick { width: 170px; padding: 0 0 2px 7px; display: flex; align-items: center; }
.qbtn { gap: 4px; }
.file { margin-left: 15px; }
.save { margin-left: 16px; }
.undo { margin-left: 16px; }
.redo { margin-left: 10px; gap: 5px; }
.home { width: 34px; background: #bababa; border-radius: 3px 3px 0 0; padding-top: 4px; }
.doc-tab { flex: 1; margin-left: 4px; padding-right: 3px; background: #f1f1f1; border-radius: 4px 4px 0 0; display: flex; align-items: center; }
.doc-name { flex: 1; display: flex; justify-content: center; align-items: center; gap: 4px; font-size: 11px; padding-left: 6px; padding-top: 2px; }
.close { width: 12px; height: 16px; }
.new-tab { width: 25px; margin-left: 4px; background: #b8b8b8; border-radius: 3px 3px 0 0; }
.status { display: flex; align-items: center; padding: 0 4px 2px 9px; }
.status button { width: 29px; }
.status button:first-child { width: 16px; margin-right: 7px; }
.status .avatar { width: 22px; margin-left: 11px; }

.ribbon { height: 75px; padding-left: 10px; display: flex; align-items: flex-start; background: #f1f1f1; border-bottom: 2px solid #f9f9f9; box-shadow: inset 0 -1px #dcdcdc; }
.workspace { width: 97px; height: 54px; margin-top: 10px; padding-bottom: 2px; border: 1px solid #ccc; border-radius: 4px; background: #f3f3f3; font-weight: bold; gap: 5px; }
.tools { margin-left: 4px; flex: 1; }
.tabs { display: flex; gap: 19px; padding-left: 11px; height: 21px; }
.tabs button { padding: 2px 10px 0; border-bottom: 3px solid transparent; }
.tabs button.active { color: #0696d7; border-bottom-color: #0696d7; }
.groups { display: grid; grid-template-columns: 237px 87px 237px 123px 92px 92px 73px 124px 70px; }
.group { display: flex; flex-direction: column; align-items: center; position: relative; }
.group:not(:last-child) { background: linear-gradient(#d6d6d6, #d6d6d6) right 3px / 1px 44px no-repeat; }
.icons { display: flex; height: 35px; align-items: center; }
.tool { width: 38px; height: 34px; }
.tool.on { width: 34px; margin: 0 2px; background: #0696d7; }
.tag { font: bold 6px "Liberation Sans", Arial, sans-serif; fill: #fff; }
.menu { gap: 4px; height: 14px; margin-top: 1px; }

.stage { flex: 1; position: relative; display: flex; justify-content: space-between; min-height: 600px; overflow: hidden; }
.scene { position: absolute; inset: 0; width: 100%; height: 100%; }
.distance { position: absolute; left: 523px; top: 277px; width: 95px; height: 20px; padding: 2px; display: flex; background: #f1f1f1; border: 1px solid #fff; }
.distance .grip { width: 10px; background: repeating-linear-gradient(45deg, #ddd 0 1px, #f5f5f5 1px 3px); border-right: 1px solid #ccc; }
.distance input { width: 62px; background: #fff; border: 1px solid #ddd; text-align: center; font-weight: bold; }
.distance button { flex: 1; }

.left, .right, .middle { position: relative; display: flex; flex-direction: column; pointer-events: none; }
.left > *, .right > *, .middle > * { pointer-events: auto; }
.left { width: 264px; margin-left: 2px; padding: 6px 0 1px; }
.bar { height: 22px; padding: 0 9px 0 4px; display: flex; align-items: center; background: #f1f1f1; border: 1px solid #ddd; border-width: 1px 1px 2px 0; border-bottom-color: #c8c8c8; }
.bar h2 { flex: 1; margin-left: 8px; }
.comments { margin-top: auto; }
.comments h2 { margin-left: 18px; }
.tree { list-style: none; margin: 2px 0 0; padding: 0; height: 403px; display: grid; grid-auto-rows: 1fr; }
.tree li { display: flex; align-items: center; min-width: 0; }
.twist { width: 24px; flex: none; display: flex; justify-content: center; }
.chip { height: 18px; display: flex; align-items: center; background: #f1f1f1; }
.eye { width: 20px; height: 18px; border-right: 1px solid #f7f7f7; }
.entry { position: relative; height: 18px; display: flex; align-items: center; gap: 6px; padding-left: 4px; }
.plain .entry { padding-left: 2px; }
.label { padding: 0 9px 0 5px; white-space: nowrap; }
.hatch .label { padding-right: 6px; }
.plain .label { padding-left: 3px; }
.root .entry { height: 14px; padding-left: 2px; margin-left: 2px; background: #999; color: #fff; font-weight: bold; }
.root { padding-right: 5px; }
.badge { margin: 0 5px 0 3px; }
.picked .entry { background: #0696d7; color: #fff; font-weight: bold; }
.hatch::after { content: ""; position: absolute; left: 3px; right: 4px; bottom: 0; height: 4px; background: repeating-linear-gradient(120deg, #6a87b3 0 2px, transparent 2px 5px); }

.middle { flex: 1; justify-content: flex-end; align-items: center; padding: 0 40px 5px 0; }
.navbar { height: 21px; padding-right: 3px; display: flex; background: #f1f1f1; border-right: 2px solid #777; }
.navbar button { width: 23px; gap: 3px; }
.navbar .wide { width: 27px; }

.right { width: 218px; padding: 12px 0 4px; }
.cube { align-self: flex-end; margin-bottom: 2px; }
.shell { background: #f1f1f1; border: 1px solid #d0d0d0; border-width: 1px 0 2px 1px; }
.shell header { height: 20px; padding: 0 2px 0 8px; display: flex; align-items: center; gap: 4px; border-bottom: 1px solid #d4d4d4; }
.pin { margin-left: auto; }
.fields { height: 135px; padding: 2px 0 0 10px; display: grid; grid-auto-rows: 1fr; border-bottom: 1px solid #d4d4d4; }
.field { display: grid; grid-template-columns: 84px auto auto 1fr; align-items: center; }
.pick { width: 69px; height: 24px; gap: 5px; background: #0696d7; color: #fff; }
.clear { width: 27px; height: 20px; }
.field input[type="checkbox"] { appearance: none; width: 12px; height: 12px; margin-left: 4px; border: 1px solid #444; border-radius: 2px; background: linear-gradient(#ddd, #fff); position: relative; }
.field input[type="checkbox"]:checked::after { content: ""; position: absolute; left: 3px; top: 0; width: 4px; height: 8px; border: solid #111; border-width: 0 2px 2px 0; transform: rotate(40deg); }
.type { width: 20px; height: 23px; margin-right: 6px; }
.type.on { background: #0696d7; }
.box { width: 96px; height: 23px; padding: 0 2px; background: #fff; border: 1px solid #ccc; }
.drop { position: relative; }
.drop .box { appearance: none; padding-left: 19px; }
.drop svg { position: absolute; left: 3px; top: 5px; pointer-events: none; }
.drop .caret { position: absolute; right: 4px; top: 10px; pointer-events: none; }
.shell footer { height: 31px; padding: 0 9px 0 6px; display: flex; align-items: center; gap: 9px; }
.shell footer svg { margin-right: auto; }
.shell footer button { width: 53px; height: 18px; border: 1px solid #bbb; background: #ececec; color: #555; }
.hint { margin-top: auto; padding-right: 5px; display: flex; justify-content: flex-end; align-items: center; gap: 12px; color: #111; }

.timeline { height: 44px; padding-left: 4px; display: flex; align-items: center; background: #f1f1f1; border-top: 1px solid #ddd; }
.playback { display: flex; }
.playback button { width: 22px; height: 22px; }
.track { position: relative; margin-left: 10px; }
.feats { display: flex; }
.feats button { width: 21px; height: 22px; }
.rail { position: absolute; left: 5px; top: 19px; }
.marker { position: absolute; left: 143px; top: -3px; }
.prefs { margin-left: auto; margin-right: 5px; }
</style>
